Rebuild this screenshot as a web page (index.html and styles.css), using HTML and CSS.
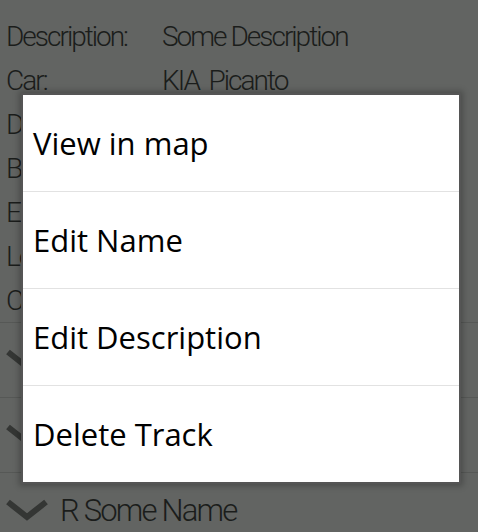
FILE: index.html
```html
<!DOCTYPE html>
<html>
<head>
<meta charset="utf-8">
<link rel="stylesheet" href="styles.css">
</head>
<body>
<div class="page">
  <div class="details">
    <div class="row"><span class="label">Description:</span><span class="value">Some Description</span></div>
    <div class="row"><span class="label">Car:</span><span class="value">KIA&nbsp; Picanto</span></div>
    <div class="row"><span class="label">Date:</span><span class="value">01.01.2014</span></div>
    <div class="row"><span class="label">Begin:</span><span class="value">10:00</span></div>
    <div class="row"><span class="label">End:</span><span class="value">11:00</span></div>
    <div class="row"><span class="label">Length:</span><span class="value">12 km</span></div>
    <div class="row"><span class="label">Cost:</span><span class="value">5 EUR</span></div>
  </div>
  <div class="group">
    <svg class="chev" viewBox="0 0 44 22"><path d="M3 3 L22 18 L41 3" fill="none" stroke="#343634" stroke-width="6"/></svg>
    <span class="gname">R Some Name</span>
  </div>
  <div class="group">
    <svg class="chev" viewBox="0 0 44 22"><path d="M3 3 L22 18 L41 3" fill="none" stroke="#343634" stroke-width="6"/></svg>
    <span class="gname">R Some Name</span>
  </div>
  <div class="group">
    <svg class="chev" viewBox="0 0 44 22"><path d="M3 3 L22 18 L41 3" fill="none" stroke="#343634" stroke-width="6"/></svg>
    <span class="gname">R Some Name</span>
  </div>
</div>
<div class="dialog">
  <div class="item">View in map</div>
  <div class="item">Edit Name</div>
  <div class="item">Edit Description</div>
  <div class="item">Delete Track</div>
</div>
</body>
</html>
```
FILE: styles.css
```css
html, body {
  margin: 0;
  padding: 0;
}
body {
  width: 478px;
  height: 532px;
  overflow: hidden;
  background: #626462;
  position: relative;
  font-family: Roboto, "Liberation Sans", sans-serif;
}
.page {
  padding-top: 14px;
  color: #1b1d1b;
}
.details {
  padding-left: 6px;
}
.row {
  display: flex;
  height: 44px;
  align-items: center;
  font-size: 28px;
  font-weight: 300;
  letter-spacing: -2px;
}
.label {
  width: 156px;
}
.group {
  display: flex;
  align-items: center;
  height: 74px;
  border-top: 1px solid #565856;
  padding-left: 5px;
  gap: 11px;
}
.group:first-of-type {
  margin-top: 5px;
}
.chev {
  width: 44px;
  height: 22px;
}
.gname {
  font-size: 31px;
  font-weight: 300;
  letter-spacing: -1.8px;
}
.dialog {
  position: absolute;
  left: 21px;
  top: 93px;
  width: 436px;
  background: #fff;
  border: 2px solid #555555;
  box-shadow: 0 0 6px 2px rgba(0,0,0,0.25);
}
.item {
  height: 96px;
  display: flex;
  align-items: center;
  padding-left: 10px;
  font-family: "Open Sans", "Noto Sans", sans-serif;
  font-size: 31px;
  color: #000;
  border-top: 1px solid #e2e2e2;
}
.item:first-child {
  border-top: none;
}
```
